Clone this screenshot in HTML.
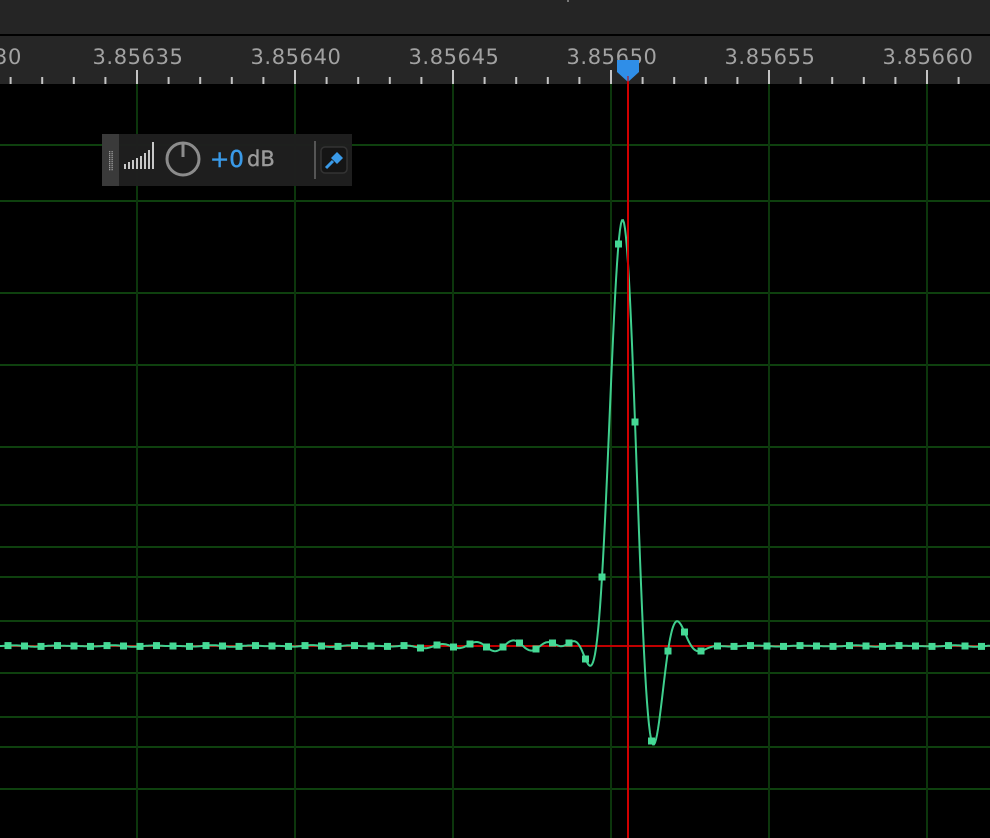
<!DOCTYPE html>
<html><head><meta charset="utf-8"><style>
html,body{margin:0;padding:0;background:#000;width:990px;height:838px;overflow:hidden;font-family:"Liberation Sans","DejaVu Sans",sans-serif}
</style></head><body>
<svg id="s" width="990" height="838" xmlns="http://www.w3.org/2000/svg" style="position:absolute;left:0;top:0">
<rect x="0" y="0" width="990" height="34" fill="#252525"/>
<rect x="567" y="0" width="2" height="2" fill="#777"/>
<rect x="0" y="34" width="990" height="2" fill="#000"/>
<rect x="0" y="36" width="990" height="48" fill="#262626"/>
<g font-family="DejaVu Sans, Liberation Sans, sans-serif" font-size="21" fill="#a2a2a2" text-anchor="middle" letter-spacing="0.6">
<text x="138" y="64">3.85635</text><text x="296" y="64">3.85640</text><text x="454" y="64">3.85645</text>
<text x="612" y="64">3.85650</text><text x="770" y="64">3.85655</text><text x="928" y="64">3.85660</text>
<text x="8" y="64">30</text>
</g>
<g id="ticks" fill="#c4c4c4"></g>
<g id="grid"></g>
<path id="wave" fill="none" stroke="#3fcf8e" stroke-width="2"/>
<g id="pts" fill="#45d995"></g>
<rect x="627" y="76" width="2" height="762" fill="#d00000"/>
<path d="M617 60 H639 V72 L628 82 L617 72 Z" fill="#2f8ee8"/>
<rect x="627.5" y="76" width="1" height="8" fill="#d00000"/>
<rect x="102" y="134" width="250" height="52" fill="#1f1f1f" opacity="0.97"/>
<rect x="102" y="134" width="17" height="52" fill="#3a3a3a"/>
<g id="dots" fill="#9a9a9a"></g>
<g fill="#c8c8c8">
<rect x="124" y="164" width="2" height="5"/><rect x="128" y="162" width="2" height="7"/><rect x="132" y="160" width="2" height="9"/>
<rect x="136" y="158" width="2" height="11"/><rect x="140" y="156" width="2" height="13"/><rect x="144" y="153" width="2" height="16"/>
<rect x="148" y="150" width="2" height="19"/><rect x="152" y="142" width="2" height="27"/>
</g>
<circle cx="183" cy="159" r="16" fill="none" stroke="#8c8c8c" stroke-width="3"/>
<rect x="181.5" y="143" width="3" height="14" fill="#8c8c8c"/>
<text x="210" y="167" font-family="DejaVu Sans, Liberation Sans, sans-serif" font-size="23" fill="#3a9ae8" stroke="#3a9ae8" stroke-width="0.5">+0</text>
<text x="247" y="166" font-family="DejaVu Sans, Liberation Sans, sans-serif" font-size="21" fill="#9a9a9a" stroke="#9a9a9a" stroke-width="0.4">dB</text>
<rect x="314" y="141" width="2" height="38" fill="#555"/>
<rect x="321" y="147" width="26" height="26" rx="4" fill="#151515" stroke="#333" stroke-width="1.5"/>
<path d="M326 168 L333 161" stroke="#3a9ae8" stroke-width="3"/>
<path d="M331 158 L337 152 L343 158 L337 164 Z" fill="#3a9ae8"/>
</svg>
<script>
var ns="http://www.w3.org/2000/svg";
function el(p,t,a){var e=document.createElementNS(ns,t);for(var k in a)e.setAttribute(k,a[k]);document.getElementById(p).appendChild(e);return e;}
for(var r=0;r<10;r++){for(var c=0;c<2;c++){el("dots","rect",{x:109+c*2.5,y:151+r*2,width:1.3,height:1.3});}}
for(var i=-5;i<40;i++){var x=137+i*31.6;if(x<0||x>990)continue;var maj=(i%5===0);
el("ticks","rect",{x:x-1,y:maj?70:77,width:2,height:maj?14:7});}
[145,201,293,365,447,505,547,577,621,673,717,747,789].forEach(function(y){el("grid","rect",{x:0,y:y-1,width:990,height:2,fill:"#0e400e"});});
[137,295,453,611,769,927].forEach(function(x){el("grid","rect",{x:x-1,y:84,width:2,height:754,fill:"#0c360c"});});
el("grid","rect",{x:0,y:645,width:990,height:2,fill:"#c00000"});
var base=646,step=16.5,x0=8;var ys=[];
for(var k=0;k<61;k++){ys.push(base+((k*7)%3-1)*0.4);}
var sp={25:648,26:645,27:647,28:644,29:647,30:647,31:643,32:649,33:643,34:643,35:659,36:577,37:244,38:422,39:741,40:651,41:632,42:651,43:646};
for(var k in sp)ys[k]=sp[k];
function sinc(t){if(Math.abs(t)<1e-6)return 1;var a=Math.PI*t;return Math.sin(a)/a;}
var d="";
for(var x=0;x<=990;x+=1){var v=0;for(var k=0;k<ys.length;k++){v+=(ys[k]-base)*sinc((x-(x0+k*step))/step);}
d+=(x?"L":"M")+x+" "+(base+v).toFixed(1);}
document.getElementById("wave").setAttribute("d",d);
for(var k=0;k<ys.length;k++){var x=x0+k*step;if(x>992)break;el("pts","rect",{x:x-3.5,y:ys[k]-3.5,width:7,height:7});}
</script>
</body></html>
